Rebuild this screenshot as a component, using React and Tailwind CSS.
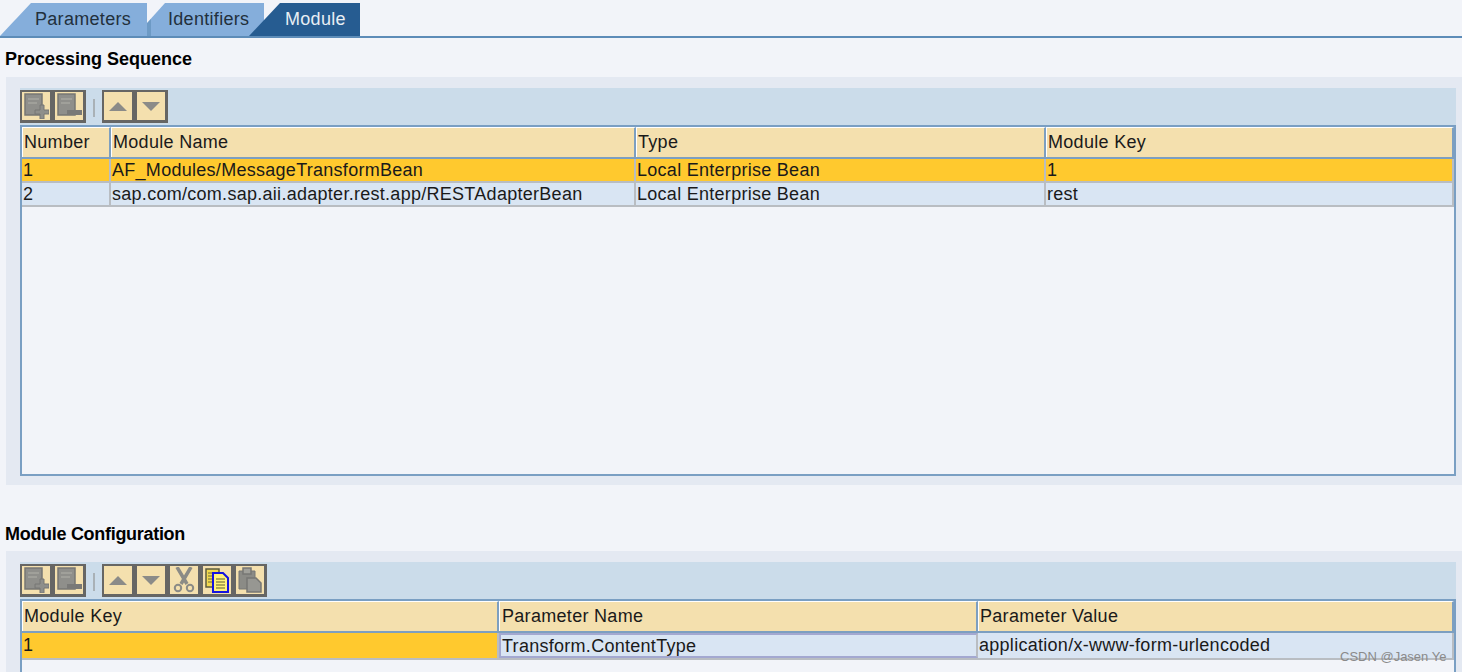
import React from 'react';

const font = "font-['Liberation_Sans',Arial,sans-serif]";

function IconButton({ children }) {
  return (
    <div className="w-[33px] h-[33px] shrink-0 bg-[#f4e0ae] border-t-2 border-l-2 border-r-[3px] border-b-[3px] border-[#666664] flex items-center justify-center">
      {children}
    </div>
  );
}

function AddIcon() {
  return (
    <svg width="26" height="26" viewBox="0 0 26 26">
      <path d="M2 1h17v21H2z" fill="#8f8f8b" stroke="#777774" strokeWidth="1.5" />
      <path d="M5 6h11M5 10h9" stroke="#a6a6a0" strokeWidth="1.5" />
      <path d="M12 17h5v-5h4v5h5v4h-5v5h-4v-5h-5z" fill="#8f8f8b" stroke="#777774" />
    </svg>
  );
}

function RemoveIcon() {
  return (
    <svg width="26" height="26" viewBox="0 0 26 26">
      <path d="M2 1h17v21H2z" fill="#8f8f8b" stroke="#777774" strokeWidth="1.5" />
      <path d="M5 6h11M5 10h9" stroke="#a6a6a0" strokeWidth="1.5" />
      <path d="M11 17h15v5H11z" fill="#797977" />
    </svg>
  );
}

function UpIcon() {
  return (
    <svg width="18" height="9" viewBox="0 0 18 9">
      <path d="M9 0l9 9H0z" fill="#8b8b88" />
    </svg>
  );
}

function DownIcon() {
  return (
    <svg width="18" height="9" viewBox="0 0 18 9">
      <path d="M0 0h18l-9 9z" fill="#8b8b88" />
    </svg>
  );
}

function CutIcon() {
  return (
    <svg width="22" height="26" viewBox="0 0 22 26">
      <path d="M4 0l10 17M18 0L8 17" stroke="#8b8b86" strokeWidth="3.5" />
      <circle cx="5" cy="21" r="3.2" fill="none" stroke="#8b8b86" strokeWidth="2" />
      <circle cx="17" cy="21" r="3.2" fill="none" stroke="#8b8b86" strokeWidth="2" />
    </svg>
  );
}

function CopyIcon() {
  return (
    <svg width="26" height="26" viewBox="0 0 26 26">
      <path d="M2 2h13v18H2z" fill="#f2d94e" stroke="#5c5c40" strokeWidth="1.5" />
      <path d="M4 6h9M4 9h9M4 12h9M4 15h9" stroke="#6b6b3c" />
      <path d="M9 6h10l5 5v14H9z" fill="#fff27a" stroke="#1414e0" strokeWidth="2" />
      <path d="M12 12h9M12 15h9M12 18h9M12 21h9" stroke="#5e5e30" />
    </svg>
  );
}

function PasteIcon() {
  return (
    <svg width="26" height="26" viewBox="0 0 26 26">
      <path d="M2 4h16v18H2z" fill="#8b8b86" stroke="#777774" />
      <path d="M6 1h8v6H6z" fill="#a0a09a" stroke="#777774" strokeWidth="1.5" />
      <path d="M10 11h9l5 5v9H10z" fill="#979792" stroke="#777774" strokeWidth="1.5" />
    </svg>
  );
}

function Toolbar({ full }) {
  return (
    <div className="h-[37px] ml-[14px] bg-[#cbdcea] pt-[2px] flex items-start">
      <IconButton><AddIcon /></IconButton>
      <IconButton><RemoveIcon /></IconButton>
      <div className="w-[2px] h-[18px] bg-[#a9b1b6] ml-[7px] mr-[7px] mt-[9px]" />
      <IconButton><UpIcon /></IconButton>
      <IconButton><DownIcon /></IconButton>
      {full && (
        <>
          <IconButton><CutIcon /></IconButton>
          <IconButton><CopyIcon /></IconButton>
          <IconButton><PasteIcon /></IconButton>
        </>
      )}
    </div>
  );
}

function HeadCell({ className, children }) {
  return (
    <div className={`${className} h-[30px] shrink-0 bg-[#f4e0ae] border-t border-l border-t-white border-l-white border-r-2 border-r-[#7d9fc0] pl-[1px] text-[18px] tracking-[0.3px] leading-[29px] text-[#1a1a1a] overflow-hidden whitespace-nowrap`}>
      {children}
    </div>
  );
}

function Cell({ className, children }) {
  return (
    <div className={`${className} shrink-0 border-r-2 border-r-[#b9bdc2] pl-[1px] text-[18px] tracking-[0.28px] leading-[22px] text-[#1a1a1a] overflow-hidden whitespace-nowrap`}>
      {children}
    </div>
  );
}

export default function App() {
  return (
    <div className={`${font} w-[1462px] h-[672px] overflow-hidden bg-[#f2f4f9] relative`}>
      {/* Tabs */}
      <div className="h-[38px] border-b-2 border-b-[#5d8cb8] pt-[3px] flex items-start text-[18px] tracking-[0.3px]">
        <div className="w-[147px] h-[33px] bg-[#85aedb] [clip-path:polygon(0_100%,31px_0,100%_0,100%_100%)] pl-[35px] leading-[33px] text-[#22303c]">Parameters</div>
        <div className="w-[117px] h-[33px] bg-[linear-gradient(to_right,#6d9ac5_4px,#85aedb_4px)] [clip-path:polygon(0_20px,18px_0,100%_0,100%_100%,0_100%)] pl-[21px] leading-[33px] text-[#22303c]">Identifiers</div>
        <div className="w-[111px] h-[33px] -ml-[15px] bg-[#265c91] [clip-path:polygon(0_100%,31px_0,100%_0,100%_100%)] pl-[36px] leading-[33px] text-[#e8eef4]">Module</div>
      </div>

      <div className="h-[39px] pl-[5px] pt-[8px] text-[18px] leading-[27px] font-bold text-black">Processing Sequence</div>

      {/* Processing Sequence panel */}
      <div className="ml-[6px] h-[408px] bg-[#e4e9f2] pt-[11px]">
        <div className="w-[1450px]">
          <Toolbar />
          <div className="ml-[14px] h-[351px] border-2 border-[#7a9fc3] bg-[#f2f4f9]">
            <div className="flex border-b-2 border-b-[#7d9fc0]">
              <HeadCell className="w-[89px]">Number</HeadCell>
              <HeadCell className="w-[525px]">Module Name</HeadCell>
              <HeadCell className="w-[410px]">Type</HeadCell>
              <HeadCell className="w-[408px]">Module Key</HeadCell>
            </div>
            <div className="flex h-[24px] bg-[#ffc92e] border-b-2 border-b-[#b9bdc2]">
              <Cell className="w-[89px] border-r-0">1</Cell>
              <Cell className="w-[525px] border-r-0">AF_Modules/MessageTransformBean</Cell>
              <Cell className="w-[410px] border-r-0">Local Enterprise Bean</Cell>
              <Cell className="w-[408px] border-r-0">1</Cell>
            </div>
            <div className="flex h-[24px] bg-[#d9e5f3] border-b-2 border-b-[#b9bdc2]">
              <Cell className="w-[89px]">2</Cell>
              <Cell className="w-[525px]">sap.com/com.sap.aii.adapter.rest.app/RESTAdapterBean</Cell>
              <Cell className="w-[410px]">Local Enterprise Bean</Cell>
              <Cell className="w-[408px]">rest</Cell>
            </div>
          </div>
        </div>
      </div>

      <div className="h-[66px] pl-[5px] pt-[36px] text-[18px] tracking-[-0.3px] leading-[27px] font-bold text-black">Module Configuration</div>

      {/* Module Configuration panel */}
      <div className="ml-[6px] h-[130px] bg-[#e4e9f2] pt-[11px]">
        <div className="w-[1450px]">
          <Toolbar full />
          <div className="ml-[14px] h-[90px] border-2 border-b-0 border-[#7a9fc3] bg-[#f2f4f9]">
            <div className="flex border-b-2 border-b-[#7d9fc0]">
              <HeadCell className="w-[477px]">Module Key</HeadCell>
              <HeadCell className="w-[479px] pl-[2px]">Parameter Name</HeadCell>
              <HeadCell className="w-[476px]">Parameter Value</HeadCell>
            </div>
            <div className="flex h-[27px] bg-[#d9e5f3] border-b-2 border-b-[#b9bdc2]">
              <Cell className="w-[477px] bg-[#ffc92e] border-r-0 leading-[25px]">1</Cell>
              <Cell className="w-[479px] border-2 border-[#a3a8d0] leading-[18px]">Transform.ContentType</Cell>
              <Cell className="w-[476px] leading-[25px]">application/x-www-form-urlencoded</Cell>
            </div>
          </div>
        </div>
      </div>

      {/* Watermark */}
      <div className="absolute left-[1340px] top-[649px] text-[13px] leading-[16px] text-[#8a8a8a]">CSDN @Jasen Ye</div>
    </div>
  );
}
